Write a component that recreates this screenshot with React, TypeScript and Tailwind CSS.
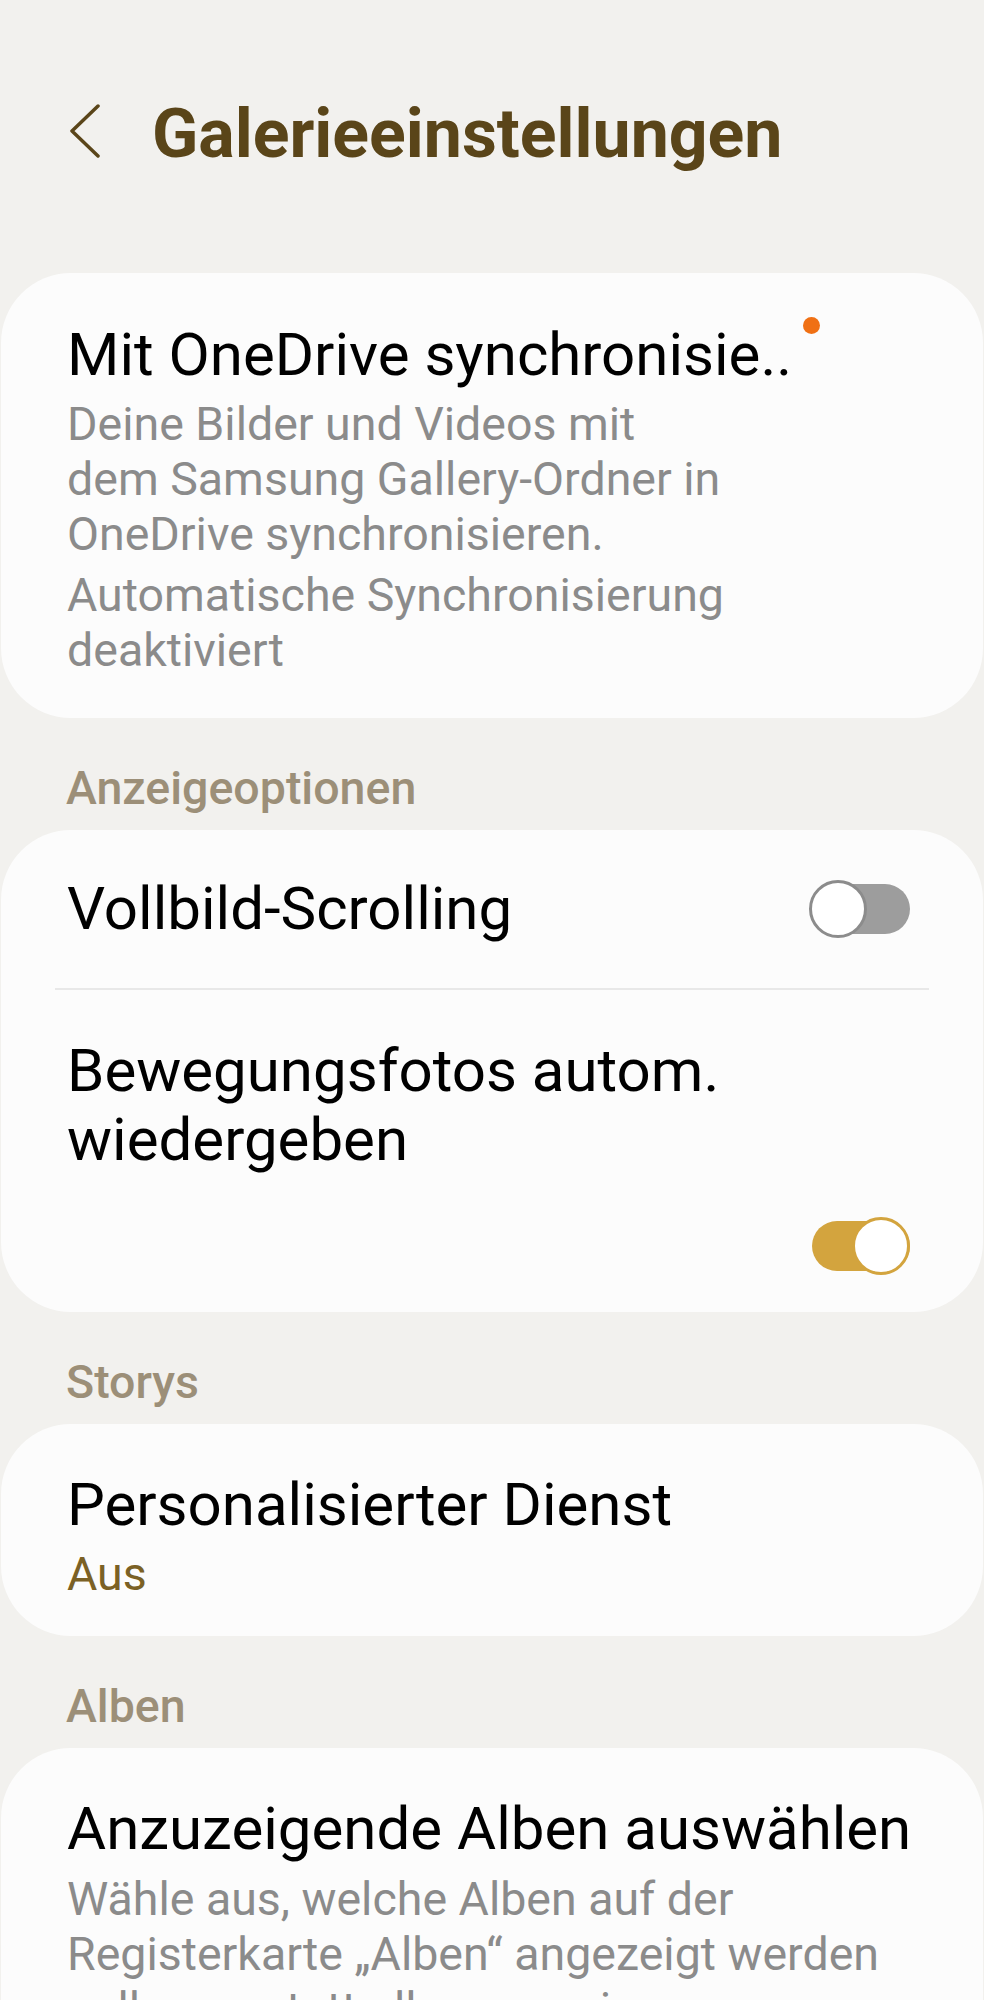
import React from 'react';

const font = { fontFamily: 'Roboto, "Noto Sans", sans-serif' };

const Toggle: React.FC<{ on: boolean }> = ({ on }) => (
  <div className="relative w-[101px] h-[58px] shrink-0">
    <div
      className={`absolute left-[3px] right-0 top-[4px] h-[50px] rounded-full ${
        on ? 'bg-[#d3a43e]' : 'bg-[#9d9d9d]'
      }`}
    />
    <div
      className={`absolute top-0 w-[58px] h-[58px] rounded-full bg-white border-[3px] ${
        on ? 'right-0 border-[#d3a43e]' : 'left-0 border-[#8c8c8c]'
      }`}
    />
  </div>
);

const SectionLabel: React.FC<{ children: React.ReactNode }> = ({ children }) => (
  <div className="pt-[43px] pb-[15px] pl-[66px] text-[46.5px] leading-[54px] font-medium text-[#9c8f78]">
    {children}
  </div>
);

const Card: React.FC<{ children: React.ReactNode; className?: string }> = ({
  children,
  className = '',
}) => (
  <div className={`mx-[1px] rounded-[70px] bg-[#fcfcfc] ${className}`}>{children}</div>
);

export default function App() {
  return (
    <div className="min-h-screen bg-[#f2f1ee] overflow-hidden" style={font}>
      {/* header */}
      <div className="flex items-start pt-[94px] pl-[70px] mb-[98px]">
        <svg
          width="32"
          height="54"
          viewBox="0 0 32 54"
          className="mt-[10px]"
          fill="none"
          stroke="#5a4519"
          strokeWidth="3.5"
          strokeLinecap="round"
          strokeLinejoin="round"
        >
          <path d="M28 2 L2 27 L28 52" />
        </svg>
        <h1 className="ml-[50px] text-[68px] leading-[81px] font-bold text-[#5a4519]">
          Galerieeinstellungen
        </h1>
      </div>

      {/* OneDrive */}
      <Card className="relative pt-[44px] pb-[40px] pl-[66px] pr-[60px]">
        <div className="text-[60px] leading-[76px] text-black whitespace-nowrap">
          Mit OneDrive synchronisie..
        </div>
        <span className="absolute left-[802px] top-[44px] w-[17px] h-[17px] rounded-full bg-[#f07014]" />
        <div className="mt-[4px] text-[46.5px] leading-[55px] text-[#8b8b8b]">
          Deine Bilder und Videos mit
          <br />
          dem Samsung Gallery-Ordner in
          <br />
          OneDrive synchronisieren.
        </div>
        <div className="mt-[6px] text-[46.5px] leading-[55px] text-[#8b8b8b]">
          Automatische Synchronisierung
          <br />
          deaktiviert
        </div>
      </Card>

      <SectionLabel>Anzeigeoptionen</SectionLabel>
      <Card>
        <div className="flex items-center justify-between h-[158px] pl-[66px] pr-[73px]">
          <span className="text-[60px] leading-[76px] text-black">Vollbild-Scrolling</span>
          <Toggle on={false} />
        </div>
        <div className="mx-[54px] h-[2px] bg-[#e8e8e8]" />
        <div className="pt-[46px] pb-[37px] pl-[66px] pr-[73px]">
          <div className="text-[60px] leading-[69px] text-black">
            Bewegungsfotos autom.
            <br />
            wiedergeben
          </div>
          <div className="mt-[43px] flex justify-end">
            <Toggle on />
          </div>
        </div>
      </Card>

      <SectionLabel>Storys</SectionLabel>
      <Card className="pt-[43px] pb-[34px] pl-[66px]">
        <div className="text-[60px] leading-[76px] text-black">Personalisierter Dienst</div>
        <div className="mt-[4px] text-[46.5px] leading-[55px] text-[#7b6125]">Aus</div>
      </Card>

      <SectionLabel>Alben</SectionLabel>
      <Card className="pt-[43px] pb-[40px] pl-[66px]">
        <div className="text-[60px] leading-[76px] text-black whitespace-nowrap">
          Anzuzeigende Alben auswählen
        </div>
        <div className="mt-[5px] text-[46.5px] leading-[55px] text-[#8b8b8b]">
          Wähle aus, welche Alben auf der
          <br />
          Registerkarte „Alben“ angezeigt werden
          <br />
          sollen, anstatt alle anzuzeigen.
        </div>
      </Card>
    </div>
  );
}
